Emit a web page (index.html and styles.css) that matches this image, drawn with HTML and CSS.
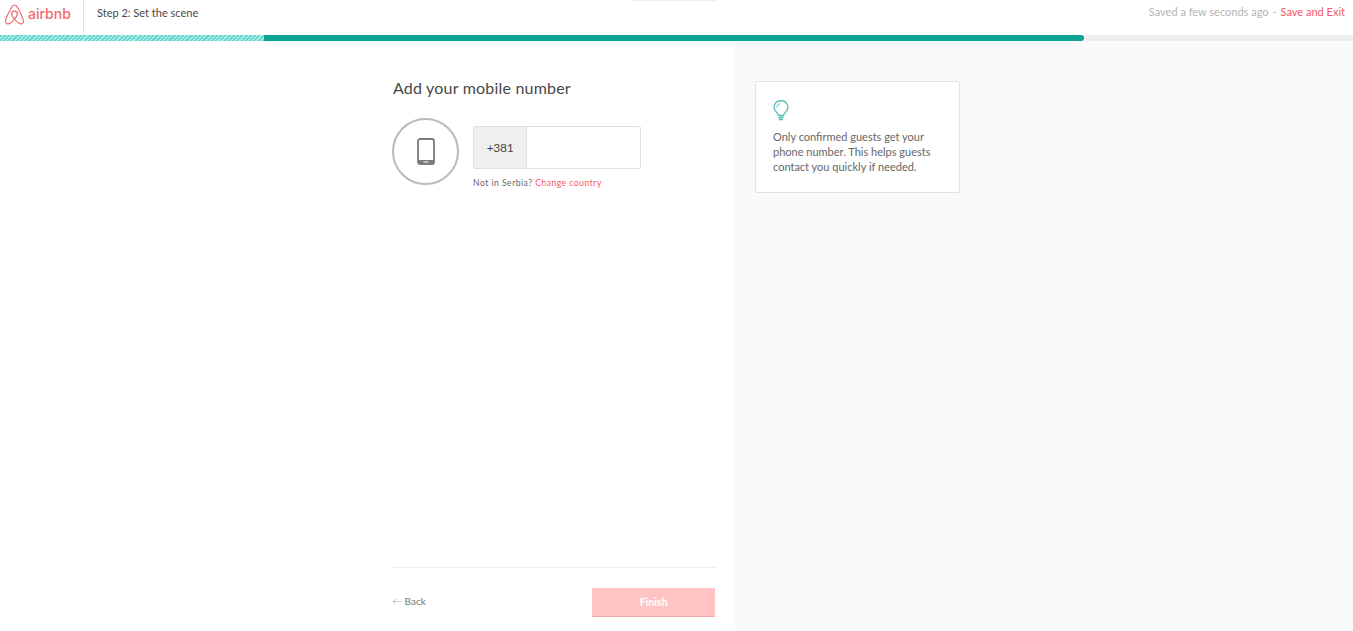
FILE: index.html
```html
<!DOCTYPE html>
<html lang="en">

<head>
    <meta charset="UTF-8" />
    <meta name="viewport" content="width=device-width, initial-scale=1.0" />
    <title>Step 2: Set the scene</title>
    <link rel="stylesheet" href="styles.css">
</head>

<body>
    <header class="header">
        <div class="brand">
            <svg class="brand-mark" viewBox="0 0 24 26" width="19" height="21" fill="none" stroke="#f4676c" stroke-width="1.500">
                <path d="M12 19C9.500 16 8.300 13.800 8.300 12.100c0-2.100 1.600-3.400 3.700-3.400s3.700 1.300 3.700 3.400c0 1.700-1.200 3.900-3.700 6.900zm0 0c-2.500 3.100-5 5.200-7.500 5.800-2.500.5-4.200-1.500-3.700-4 .4-2.300 4.700-12 7.700-17.300C9.500 1.800 10.500 1 12 1s2.500.8 3.500 2.500c3 5.300 7.300 15 7.700 17.300.5 2.500-1.200 4.500-3.700 4-2.500-.6-5-2.700-7.500-5.800z" />
            </svg>
            <span class="brand-name">airbnb</span>
        </div>
        <div class="step">Step 2: Set the scene</div>
        <div class="saved">
            <span class="saved-note">Saved a few seconds ago</span>
            <span class="saved-note">-</span>
            <a class="link" href="#">Save and Exit</a>
        </div>
        <div class="top-tab"></div>
    </header>

    <div class="progress">
        <div class="progress-done"></div>
        <div class="progress-current"></div>
    </div>

    <div class="main">
        <section class="form-side">
            <div class="form-body">
                <h1 class="title">Add your mobile number</h1>
                <div class="phone-row">
                    <div class="phone-circle">
                        <svg viewBox="0 0 18 27" width="18" height="27">
                            <rect x="1" y="1" width="16" height="25" rx="2" fill="none" stroke="#7b7b7b" stroke-width="1.800" />
                            <path d="M1 22h16v2a2 2 0 0 1-2 2H3a2 2 0 0 1-2-2z" fill="#7b7b7b" />
                            <rect x="6.500" y="23.500" width="5" height="1" fill="#fff" />
                        </svg>
                    </div>
                    <div class="phone-fields">
                        <div class="phone-input">
                            <span class="phone-code">+381</span>
                            <input class="phone-number" type="text" />
                        </div>
                        <p class="country">Not in Serbia? <a class="link" href="#">Change country</a></p>
                    </div>
                </div>
            </div>

            <div class="form-footer">
                <a class="back" href="#"><span class="back-arrow">&larr;</span> Back</a>
                <button class="finish" disabled>Finish</button>
            </div>
        </section>

        <aside class="tip-side">
            <div class="tip">
                <svg class="tip-icon" viewBox="0 0 16 21" width="16" height="21" fill="none" stroke="#4fbdb3" stroke-width="1.300">
                    <path d="M5.500 15.500C5 12.500 1 11.200 1 7.500a7 7 0 0 1 14 0c0 3.700-4 5-4.500 8z" />
                    <path d="M3.700 7.500A4.300 4.300 0 0 1 7 3.500" stroke-width=".9" />
                    <path d="M5.500 17.500h5M6 19.500h4" />
                </svg>
                <p class="tip-text">Only confirmed guests get your phone number. This helps guests contact you quickly if needed.</p>
            </div>
        </aside>
    </div>
</body>

</html>
```

FILE: styles.css
```css
* {
    box-sizing: border-box;
}

html,
body {
    height: 100%;
}

body {
    margin: 0;
    display: flex;
    flex-direction: column;
    overflow: hidden;
    background-color: white;
    font-family: "Lato", "Liberation Sans", sans-serif;
    color: #484848;
}

.link {
    color: #f4585e;
    text-decoration: none;
}

/* top bar */
.header {
    height: 35px;
    display: flex;
    align-items: flex-start;
    position: relative;
    flex-shrink: 0;
}

.brand {
    width: 84px;
    height: 35px;
    padding: 4px 0 0 5px;
    display: flex;
    align-items: flex-start;
    gap: 4px;
    border-right: 1px solid #e4e4e4;
}

.brand-mark {
    flex-shrink: 0;
}

.brand-name {
    color: #f4676c;
    font-size: 14px;
    font-weight: 500;
    line-height: 20px;
    font-family: "Inter", sans-serif;
}

.step {
    margin-left: 13px;
    padding-top: 6px;
    font-size: 11px;
    line-height: 14px;
}

.saved {
    margin-left: auto;
    margin-right: 8px;
    padding-top: 5px;
    font-size: 11px;
    line-height: 14px;
    display: flex;
    gap: 4px;
}

.saved-note {
    color: #b4b4b4;
}

.top-tab {
    position: absolute;
    left: 632px;
    top: 0;
    width: 84px;
    height: 1px;
    background-color: #eeeeee;
}

/* progress bar */
.progress {
    height: 6px;
    display: flex;
    flex-shrink: 0;
    background-color: #efefef;
}

.progress-done {
    width: 264px;
    background-image: repeating-linear-gradient(135deg, #62d8cd 0, #62d8cd 1.500px, #a8eae3 1.500px, #a8eae3 3px);
}

.progress-current {
    width: 820px;
    background-color: #0ca394;
    border-radius: 0 3px 3px 0;
}

/* page columns */
.main {
    flex: 1;
    display: flex;
    min-height: 0;
}

.form-side {
    width: 735px;
    padding: 0 19px 15px 392px;
    display: flex;
    flex-direction: column;
}

.form-body {
    flex: 1;
    padding-top: 37px;
}

.title {
    margin: 0 0 0 1px;
    font-size: 16px;
    font-weight: 400;
    line-height: 20px;
    letter-spacing: 0.2px;
}

.phone-row {
    display: flex;
    gap: 14px;
    margin-top: 20px;
}

.phone-circle {
    width: 67px;
    height: 67px;
    border: 2px solid #bbbbbb;
    border-radius: 50%;
    display: flex;
    justify-content: center;
    align-items: center;
}

.phone-fields {
    padding-top: 8px;
}

.phone-input {
    width: 168px;
    height: 43px;
    display: flex;
    border: 1px solid #dfdfdf;
    border-radius: 2px;
}

.phone-code {
    width: 53px;
    display: flex;
    justify-content: center;
    align-items: center;
    background-color: #eff0ee;
    border-right: 1px solid #dfdfdf;
    font-size: 12px;
    letter-spacing: -0.3px;
}

.phone-number {
    flex: 1;
    min-width: 0;
    border: 0;
    background-color: transparent;
}

.country {
    margin: 9px 0 0;
    font-size: 8.500px;
    letter-spacing: 0.53px;
    line-height: 10px;
    color: #666666;
}

.form-footer {
    display: flex;
    justify-content: space-between;
    align-items: center;
    height: 49px;
    padding-top: 20px;
    border-top: 1px solid #eeeeee;
}

.back {
    color: #767676;
    font-size: 10px;
    margin-top: -2px;
    text-decoration: none;
}

.back-arrow {
    color: #c4c4c4;
}

.finish {
    width: 123px;
    height: 29px;
    margin-right: 1px;
    border: 0;
    border-bottom: 1px solid #f0adad;
    background-color: #ffc3c4;
    color: white;
    font-family: inherit;
    font-size: 10.500px;
    font-weight: 700;
}

/* help column */
.tip-side {
    flex: 1;
    padding: 40px 0 0 20px;
    background-color: #fafafa;
}

.tip {
    width: 205px;
    height: 112px;
    padding: 18px 17px 0;
    background-color: white;
    border: 1px solid #e2e2e2;
    border-radius: 2px;
}

.tip-icon {
    display: block;
}

.tip-text {
    margin: 8px 0 0;
    font-size: 11px;
    line-height: 15px;
    color: #666666;
}
```
